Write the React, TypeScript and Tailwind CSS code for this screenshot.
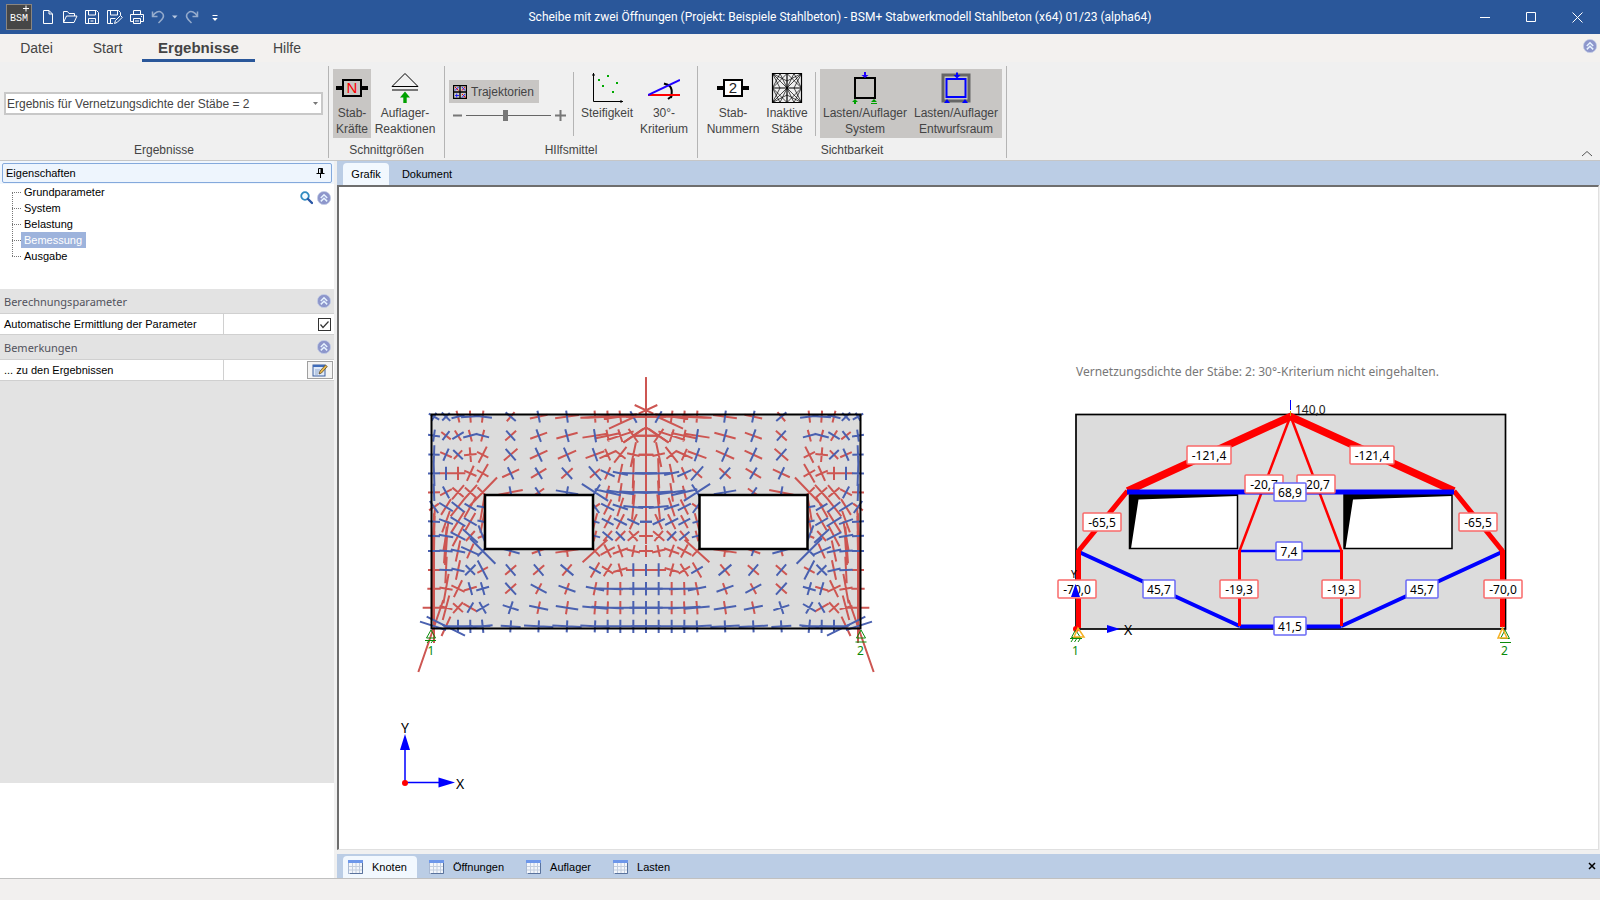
import type { ReactNode } from 'react';

/* ---------- small icons ---------- */

function CollapseIcon() {
  return (
    <svg width="14" height="14" viewBox="0 0 14 14" aria-hidden="true">
      <circle cx="7" cy="7" r="6.6" fill="#8d96cb" stroke="#c3cde6" strokeWidth="0.8" />
      <path d="M3.8 7 7 3.8 10.2 7M3.8 10.4 7 7.2l3.2 3.2" fill="none" stroke="#e6f3ff" strokeWidth="1.5" />
    </svg>
  );
}

function TableIcon() {
  return (
    <svg width="16" height="14" viewBox="0 0 16 14" aria-hidden="true">
      <rect x="0.5" y="0.5" width="14" height="13" fill="#f3f6fb" stroke="#a9b9d3" />
      <rect x="0" y="0" width="15" height="3" fill="#6d97ea" />
      <path d="M1 6.5h13M1 10h13M4.5 3v10M8 3v10M11.5 3v10" stroke="#c3cede" fill="none" />
      <path d="M14.5 3v10.5H2" stroke="#5a739d" fill="none" />
    </svg>
  );
}

type QuickAction = { name: string; box: string; icon: ReactNode };

const quickActions: QuickAction[] = [
  {
    name: 'Neu',
    box: 'w-[22px]',
    icon: (
      <svg width="12" height="16" viewBox="0 0 12 16">
        <path d="M1.5 1.5H7L10.5 5v9.5h-9zM7 1.5V5h3.5" />
      </svg>
    ),
  },
  {
    name: 'Öffnen',
    box: 'w-[22px]',
    icon: (
      <svg width="16" height="16" viewBox="0 0 16 16">
        <path d="M1.5 13.5v-11h4l1.5 2h5.5V7M1.5 13.5 4.5 7H15l-3 6.5z" />
      </svg>
    ),
  },
  {
    name: 'Speichern',
    box: 'w-[22px]',
    icon: (
      <svg width="16" height="16" viewBox="0 0 16 16">
        <path d="M1.5 1.5h11l2 2v11h-13zM4.5 1.5V6h7V1.5M4.5 14.5v-5h7v5M6.5 12h3" />
      </svg>
    ),
  },
  {
    name: 'Speichern unter',
    box: 'w-[23px]',
    icon: (
      <svg width="17" height="16" viewBox="0 0 17 16">
        <path d="M7 14.500H1.500v-13h11l2 2v3M4.500 1.500V6h7V1.500M4.500 14.500v-5h5M8.500 14.500l1-3 5-5 1.800 1.800-5 5z" />
      </svg>
    ),
  },
  {
    name: 'Drucken',
    box: 'w-[21px]',
    icon: (
      <svg width="16" height="16" viewBox="0 0 16 16">
        <path d="M4.5 5.5v-4h7v4M4.5 12.5h-3v-7h13v7h-3M4.5 9.500h7v5h-7zM6 12h4M12 7.500h1" />
      </svg>
    ),
  },
  {
    name: 'Rückgängig',
    box: 'w-[22px] opacity-50',
    icon: (
      <svg width="16" height="16" viewBox="0 0 16 16">
        <path d="M2.5 2.500v5h5M2.500 7.500C5 3 9 1.500 11.500 3.500c4 3 1.500 6.500-3 10.500" strokeWidth="1.5" />
      </svg>
    ),
  },
  {
    name: 'Rückgängig-Liste',
    box: 'w-[12px]',
    icon: (
      <svg width="6" height="16" viewBox="0 0 6 16">
        <path d="M0 6.500h5.500L2.800 9.500z" fill="#b9c9e0" stroke="none" />
      </svg>
    ),
  },
  {
    name: 'Wiederholen',
    box: 'w-[22px] opacity-50',
    icon: (
      <svg width="16" height="16" viewBox="0 0 16 16">
        <path d="M13.500 2.500v5h-5M13.500 7.500C11 3 7 1.500 4.500 3.500c-4 3-1.500 6.500 3 10.500" strokeWidth="1.5" />
      </svg>
    ),
  },
  {
    name: 'Anpassen',
    box: 'w-[24px]',
    icon: (
      <svg width="6" height="16" viewBox="0 0 6 16">
        <path d="M0.5 6.500h5" />
        <path d="M0.300 9h5.400L3 12z" fill="#fff" stroke="none" />
      </svg>
    ),
  },
];

function TitleBar() {
  return (
    <header className="relative flex h-[34px] items-center justify-between bg-[#2a579a] text-white">
      <div className="flex items-center">
        <svg className="ml-1.5 mr-[5px]" width="26" height="26" viewBox="0 0 26 26" aria-label="BSM+">
          <rect x="0.5" y="0.5" width="25" height="25" fill="#464646" stroke="#8a8580" />
          <text x="4" y="17" fontSize="10" fill="#fff" fontFamily="Liberation Mono, monospace">
            BSM
          </text>
          <path d="M20 1.500v6M17 4.500h6" stroke="#fff" />
        </svg>
        {quickActions.map(({ name, box, icon }) => (
          <button
            key={name}
            aria-label={name}
            className={`flex h-8 items-center justify-center fill-none stroke-white ${box}`}
          >
            {icon}
          </button>
        ))}
      </div>
      <h1 className="pointer-events-none absolute inset-x-0 pl-20 text-center font-[Roboto,sans-serif] text-[12px]">
        Scheibe mit zwei Öffnungen (Projekt: Beispiele Stahlbeton) - BSM+ Stabwerkmodell Stahlbeton (x64) 01/23
        (alpha64)
      </h1>
      <div className="flex fill-none stroke-white">
        <button aria-label="Minimieren" className="flex h-[34px] w-[46px] items-center justify-center">
          <svg width="11" height="11" viewBox="0 0 11 11">
            <path d="M0 5.500h10" />
          </svg>
        </button>
        <button aria-label="Maximieren" className="flex h-[34px] w-[46px] items-center justify-center">
          <svg width="11" height="11" viewBox="0 0 11 11">
            <path d="M0.500 0.500h9v9h-9z" />
          </svg>
        </button>
        <button aria-label="Schließen" className="flex h-[34px] w-[46px] items-center justify-center">
          <svg width="11" height="11" viewBox="0 0 11 11">
            <path d="M0.500 0.500l10 10M10.500 0.500l-10 10" />
          </svg>
        </button>
      </div>
    </header>
  );
}

function MenuTabs() {
  return (
    <nav className="flex h-[28px] justify-between bg-[#f3f1ef] text-[14px] text-[#444]">
      <div className="flex">
        <button className="w-[73px]">Datei</button>
        <button className="w-[69px]">Start</button>
        <button className="w-[113px] border-b-[3px] border-[#2a579a] pt-[3px] text-[15px] font-bold">
          Ergebnisse
        </button>
        <button className="w-16">Hilfe</button>
      </div>
      <button aria-label="Menüband ausblenden" className="mr-[3px] self-start pt-[5px]">
        <CollapseIcon />
      </button>
    </nav>
  );
}

/* ---------- ribbon ---------- */

function RibbonGroup({ title, className, children }: { title: string; className: string; children: ReactNode }) {
  return (
    <section className={`flex h-[92px] flex-col border-r border-[#b4b4b4] ${className}`}>
      <div className="flex h-[77px] items-start pt-[3px]">{children}</div>
      <h2 className="text-center text-[12px] leading-4">{title}</h2>
    </section>
  );
}

type RibbonButtonProps = { lines: string[]; className: string; icon: ReactNode; active?: boolean };

function RibbonButton({ lines, className, icon, active }: RibbonButtonProps) {
  return (
    <button
      aria-pressed={active}
      className={`flex h-[69px] flex-col items-center pt-[3px] text-[12px] leading-4 ${
        active ? 'bg-[#c8c6c4]' : ''
      } ${className}`}
    >
      <span className="mb-px">{icon}</span>
      {lines.map((line) => (
        <span key={line} className="whitespace-nowrap">
          {line}
        </span>
      ))}
    </button>
  );
}

function MemberIcon({ label, color, fill }: { label: string; color: string; fill: string }) {
  return (
    <svg className="block" width="32" height="32" viewBox="0 0 32 32" aria-hidden="true">
      <path d="M0 16h32" stroke="#000" strokeWidth="4" />
      <rect x="7" y="8" width="18" height="16" fill={fill} stroke="#000" strokeWidth="2" />
      <text x="16" y="21" textAnchor="middle" fontSize="15" fill={color} fontFamily="Liberation Sans, sans-serif">
        {label}
      </text>
    </svg>
  );
}

function SupportIcon() {
  return (
    <svg className="block" width="32" height="32" viewBox="0 0 32 32" aria-hidden="true">
      <path d="M16 1.500 29 14.500H3zM3 18h26" fill="none" stroke="#000" />
      <path d="M16 19.500l5 6h-3.300V31h-3.400v-5.500H11z" fill="#00a000" />
    </svg>
  );
}

function StiffnessIcon() {
  const dots = [
    [8, 8],
    [17, 4],
    [12, 14],
    [26, 11],
    [22, 20],
  ];
  return (
    <svg className="block" width="32" height="32" viewBox="0 0 32 32" aria-hidden="true">
      <path d="M2.500 1v28.500H32M1 3h3M30 28v3" fill="none" stroke="#000" />
      {dots.map(([x, y]) => (
        <rect key={x} x={x - 1} y={y - 1} width="2" height="2" fill="#00a800" />
      ))}
    </svg>
  );
}

function AngleIcon() {
  return (
    <svg className="block" width="32" height="32" viewBox="0 0 32 32" aria-hidden="true">
      <path d="M17 12q9 1 6 14M16 11.500l5 2M20 27l4-3" fill="none" stroke="#000" strokeWidth="2" />
      <path d="M0 23h32" stroke="#f00" strokeWidth="2" />
      <path d="M0 23 32 8" stroke="#2000ff" strokeWidth="2" />
    </svg>
  );
}

function MeshIcon() {
  return (
    <svg className="block" width="32" height="32" viewBox="0 0 32 32" aria-hidden="true">
      <g fill="none" stroke="#000" strokeWidth="0.7">
        <path d="M1.500 1.500h29v29h-29zM16 1.500v29M1.500 16h29" strokeWidth="1.2" />
        <path d="M1.500 1.500l29 29M30.500 1.500l-29 29M16 1.500 1.500 16 16 30.500 30.500 16z" />
        <path d="M1.500 1.500 16 9 30.500 1.500 23 16l7.500 14.500L16 23 1.500 30.500 9 16z" />
        <path d="M9 1.500 1.500 16 9 30.500 16 16zM23 1.500 30.500 16 23 30.500 16 16z" />
      </g>
    </svg>
  );
}

function SystemLoadIcon() {
  return (
    <svg className="block" width="32" height="32" viewBox="0 0 32 32" aria-hidden="true">
      <rect x="6" y="6" width="20" height="20" fill="none" stroke="#000" strokeWidth="2" />
      <path d="M15 0h2v3h2.500L16 6l-3.500-3H15z" fill="#2000ff" />
      <path d="M6 27l3 3H7v2H5v-2H3zM25 27l3 3h-6zM22 31h6v1h-6z" fill="#00a000" />
    </svg>
  );
}

function DesignLoadIcon() {
  return (
    <svg className="block" width="32" height="32" viewBox="0 0 32 32" aria-hidden="true">
      <rect x="3" y="3" width="26" height="26" fill="none" stroke="#666" strokeWidth="3" />
      <rect x="6.500" y="7" width="19" height="18" fill="none" stroke="#00f" strokeWidth="2" />
      <path d="M16 0.500h2V3h2.500L17 6.500 13.500 3H16zM7 27l3 4H4zM25 27l3 4h-6z" fill="#00f" />
    </svg>
  );
}

function TrajectoryIcon() {
  return (
    <svg width="14" height="14" viewBox="0 0 14 14" aria-hidden="true">
      <path d="M0.500 0.500h13v13h-13zM7 0v14M0 7h14" fill="none" stroke="#000" strokeWidth="1.3" />
      <path d="M2 2l3.500 3.500M9 5.500 12 2M9 9l3.500 3.500" stroke="#f00" />
      <path d="M2 5.500 5.500 2M9 2l3 3.500M3.700 8.500v4M2 10.500h4M9 12.500 12 9" stroke="#22f" />
    </svg>
  );
}

function Ribbon() {
  return (
    <div className="relative flex h-[99px] border-b border-[#c6c6c6] bg-[#f0f0f0] pt-1 text-[#444]">
      <RibbonGroup title="Ergebnisse" className="w-[329px]">
        <label className="relative ml-1 mt-[23px] block h-[23px] w-[319px]">
          <select
            aria-label="Ergebnis"
            className="block h-[23px] w-full appearance-none border-2 border-[#c8c8c8] bg-white pl-px text-[12px] text-[#444]"
          >
            <option>Ergebnis für Vernetzungsdichte der Stäbe = 2</option>
          </select>
          <svg className="pointer-events-none absolute right-[5px] top-[10px]" width="5" height="3">
            <path d="M0 0h5L2.500 3z" fill="#777" />
          </svg>
        </label>
      </RibbonGroup>
      <RibbonGroup title="Schnittgrößen" className="w-[116px]">
        <RibbonButton
          active
          className="ml-1 w-[38px]"
          lines={['Stab-', 'Kräfte']}
          icon={<MemberIcon label="N" color="#f00" fill="#c8c6c4" />}
        />
        <RibbonButton className="w-[68px]" lines={['Auflager-', 'Reaktionen']} icon={<SupportIcon />} />
      </RibbonGroup>
      <RibbonGroup title="HIlfsmittel" className="w-[253px]">
        <div className="ml-1 flex w-[120px] flex-col pt-[11px]">
          <button aria-pressed className="flex h-[23px] w-[90px] items-center gap-1 bg-[#c8c6c4] pl-1 text-[12px]">
            <TrajectoryIcon />
            Trajektorien
          </button>
          <div className="flex h-[25px] items-center gap-1 pl-1">
            <svg width="9" height="11" aria-hidden="true">
              <path d="M0 5.500h9" stroke="#777" strokeWidth="2" />
            </svg>
            <input
              type="range"
              aria-label="Größe der Trajektorien"
              defaultValue={46}
              className="h-3 w-[85px] appearance-none bg-[linear-gradient(#666,#666)] bg-[length:100%_1px] bg-center bg-no-repeat [&::-webkit-slider-thumb]:h-[11px] [&::-webkit-slider-thumb]:w-[5px] [&::-webkit-slider-thumb]:appearance-none [&::-webkit-slider-thumb]:bg-[#777]"
            />
            <svg width="11" height="11" aria-hidden="true">
              <path d="M0 5.500h11M5.500 0v11" stroke="#777" strokeWidth="2" />
            </svg>
          </div>
        </div>
        <div className="ml-1 mt-[3px] h-16 w-px bg-[#b4b4b4]" />
        <RibbonButton className="ml-1 w-[58px]" lines={['Steifigkeit']} icon={<StiffnessIcon />} />
        <RibbonButton className="w-[56px]" lines={['30°-', 'Kriterium']} icon={<AngleIcon />} />
      </RibbonGroup>
      <RibbonGroup title="Sichtbarkeit" className="w-[309px]">
        <RibbonButton
          className="ml-1 w-[62px]"
          lines={['Stab-', 'Nummern']}
          icon={<MemberIcon label="2" color="#222" fill="#fff" />}
        />
        <RibbonButton className="w-[46px]" lines={['Inaktive', 'Stäbe']} icon={<MeshIcon />} />
        <div className="ml-[5px] mt-[3px] h-16 w-px bg-[#b4b4b4]" />
        <RibbonButton
          active
          className="ml-1 w-[90px]"
          lines={['Lasten/Auflager', 'System']}
          icon={<SystemLoadIcon />}
        />
        <RibbonButton
          active
          className="w-[92px]"
          lines={['Lasten/Auflager', 'Entwurfsraum']}
          icon={<DesignLoadIcon />}
        />
      </RibbonGroup>
      <button aria-label="Menüband minimieren" className="mb-[3px] ml-auto mr-[7px] self-end">
        <svg width="12" height="7" viewBox="0 0 12 7">
          <path d="M1 6 6 1.500 11 6" fill="none" stroke="#555" />
        </svg>
      </button>
    </div>
  );
}

/* ---------- property panel ---------- */

const treeItems = ['Grundparameter', 'System', 'Belastung', 'Bemessung', 'Ausgabe'];

function SectionHead({ title }: { title: string }) {
  return (
    <div className="flex h-[25px] items-center justify-between border-b border-[#d0d0d0] bg-[#e3e3e3] pl-1 pr-[3px]">
      <h3 className='pt-0.5 font-["Noto_Sans",sans-serif] text-[11px] text-[#52525c]'>{title}</h3>
      <button aria-label={`${title} einklappen`}>
        <CollapseIcon />
      </button>
    </div>
  );
}

function PropertyPanel() {
  return (
    <aside className="flex w-[334px] shrink-0 flex-col bg-white text-[11px] text-black">
      <div className="bg-[#f0f6fd] px-0.5 pb-px pt-0.5">
        <div className="flex h-5 items-center justify-between rounded-[2px] border border-[#84a9dc] bg-[#eef5fd] pl-[3px] pr-1.5">
          <h2>Eigenschaften</h2>
          <button aria-label="Anheften">
            <svg width="9" height="10" viewBox="0 0 9 10">
              <path d="M2.500 0.500h4v5h-4zM0.500 5.500h8M4.500 5.500V10" fill="none" stroke="#000" />
              <path d="M5.500 0.500v5" stroke="#000" strokeWidth="2" />
            </svg>
          </button>
        </div>
      </div>
      <div className="flex h-[105px] justify-between pl-3 pr-[3px]">
        <div className="relative">
          <ul>
            {treeItems.map((item) => (
              <li key={item} className="flex h-4 items-center">
                <span className="w-[9px] border-t border-dotted border-[#777]" />
                <button
                  className={`h-4 pl-[3px] leading-4 ${item === 'Bemessung' ? 'bg-[#9db3dc] pr-1 text-white' : ''}`}
                >
                  {item}
                </button>
              </li>
            ))}
          </ul>
          <span className="absolute left-0 top-2 h-16 border-l border-dotted border-[#777]" />
        </div>
        <div className="flex items-start gap-1 pt-[7px]">
          <button aria-label="Suchen">
            <svg width="13" height="14" viewBox="0 0 13 14">
              <circle cx="5" cy="5" r="3.8" fill="#f4fbff" stroke="#2f8ac0" strokeWidth="1.8" />
              <path d="M8 8l4 4" stroke="#2b57a5" strokeWidth="2.4" strokeLinecap="round" />
            </svg>
          </button>
          <button aria-label="Einklappen">
            <CollapseIcon />
          </button>
        </div>
      </div>
      <SectionHead title="Berechnungsparameter" />
      <div className="flex h-[21px] items-center border-b border-[#d0d0d0]">
        <label htmlFor="auto" className="w-[224px] border-r border-[#d0d0d0] pl-1 leading-5">
          Automatische Ermittlung der Parameter
        </label>
        <span className="relative ml-auto mr-[3px] h-[13px] w-[13px]">
          <input
            id="auto"
            type="checkbox"
            defaultChecked
            className="block h-[13px] w-[13px] appearance-none border border-[#333] bg-white"
          />
          <svg className="pointer-events-none absolute left-0 top-0" width="13" height="13" viewBox="0 0 13 13">
            <path d="M2.500 6.500l2.500 3 5.500-6" fill="none" stroke="#333" strokeWidth="1.2" />
          </svg>
        </span>
      </div>
      <SectionHead title="Bemerkungen" />
      <div className="flex h-[21px] items-center border-b border-[#d0d0d0]">
        <span className="w-[224px] border-r border-[#d0d0d0] pl-1 leading-5">... zu den Ergebnissen</span>
        <button
          aria-label="Bemerkungen bearbeiten"
          className="ml-auto mr-px flex h-[18px] w-[26px] items-center justify-center border border-[#a0a0a0] bg-[#f4f4f4]"
        >
          <svg width="16" height="13" viewBox="0 0 16 13">
            <rect x="1" y="1" width="12" height="11" fill="#dfeafa" stroke="#3c5f9e" />
            <rect x="1" y="1" width="12" height="2" fill="#3f6cba" />
            <path d="M3 6h5M3 8h4M3 10h3" stroke="#93a9cc" />
            <path d="M7 10l1-3 5.500-6 1.800 1.500L9.500 9z" fill="#e9b94e" stroke="#4a3b1d" strokeWidth="0.7" />
          </svg>
        </button>
      </div>
      <div className="flex-1 bg-[#e3e3e3]" />
      <div className="h-[95px]" />
    </aside>
  );
}

/* ---------- stress trajectories ---------- */

const RED = '#cd5652';
const BLUE = '#4a61b0';

// angle, half length of main line, half length of cross line, their colours
type Cross = [number, number, number, string] | null;

const columns = [72, 108, 144, 181, 218, 302, 386, 471, 555, 593, 631, 670, 708];
const rows = [140, 197, 254, 310, 367, 411, 455, 498, 543, 600, 656, 713, 769];

const crosses: Cross[][] = [
  [[30, 18, 14, 'bb'], [45, 18, 16, 'bb'], [-14, 20, 18, 'br'], [-4, 28, 18, 'br'], [7, 28, 18, 'br'], [40, 20, 18, 'br'], [-12, 27, 18, 'rb'], [-8, 36, 18, 'rb'], [-4, 44, 18, 'rr'], [-3, 60, 18, 'rr'], [-8, 50, 18, 'rr'], [0, 38, 0, 'rb'], [0, 60, 20, 'rr']],
  [[8, 18, 18, 'bb'], [38, 18, 17, 'rb'], [-32, 20, 18, 'br'], [-15, 22, 18, 'br'], [15, 20, 18, 'br'], [-42, 22, 20, 'rb'], [-20, 27, 20, 'rb'], [-15, 33, 20, 'rb'], [-9, 38, 20, 'rb'], [-12, 40, 18, 'rr'], [-18, 42, 20, 'rr'], [-35, 36, 25, 'rr'], [0, 38, 20, 'rr']],
  [[92, 28, 17, 'bb'], [24, 19, 20, 'rb'], [44, 20, 18, 'br'], [85, 22, 19, 'rr'], [-63, 27, 19, 'rr'], [-41, 27, 23, 'rb'], [-25, 29, 23, 'rb'], [-24, 30, 23, 'rb'], [-20, 30, 21, 'rb'], [-24, 27, 19, 'rr'], [-52, 30, 20, 'rr'], [-78, 38, 19, 'rr'], [0, 22, 20, 'rr']],
  [[88, 38, 18, 'bb'], [0, 20, 20, 'rb'], [0, 22, 20, 'rr'], [-66, 25, 20, 'rr'], [-60, 32, 20, 'rr'], [-25, 28, 20, 'rb'], [-31, 27, 20, 'rb'], [-42, 23, 23, 'rb'], [49, 28, 20, 'br'], [24, 23, 20, 'br'], [-78, 29, 23, 'rb'], [-88, 45, 35, 'rb'], [0, 33, 0, 'br']],
  [[88, 26, 18, 'br'], [-28, 20, 20, 'rb'], [-50, 28, 22, 'rr'], [-48, 30, 22, 'rr'], [-46, 62, 22, 'rr'], [-11, 37, 18, 'rb'], [-35, 20, 18, 'rb'], [10, 34, 18, 'bb'], [33, 47, 28, 'bb'], [13, 40, 20, 'br'], [8, 42, 28, 'br'], [3, 42, 36, 'br'], [0, 40, 0, 'br']],
  [[55, 22, 18, 'br'], [-58, 28, 24, 'rb'], [-52, 36, 24, 'rb'], [-60, 36, 20, 'rb'], [-80, 40, 18, 'rb'], null, null, null, [55, 22, 18, 'br'], [-63, 25, 22, 'rb'], [-72, 29, 24, 'rb'], [-84, 38, 30, 'rb'], [0, 22, 0, 'br']],
  [[-86, 40, 18, 'rb'], [-70, 34, 22, 'rb'], [-58, 38, 26, 'rb'], [-60, 30, 22, 'rb'], [-78, 34, 16, 'rb'], null, null, null, [-75, 26, 14, 'rb'], [-62, 22, 20, 'rb'], [-63, 25, 22, 'rb'], [-65, 25, 20, 'rb'], [0, 18, 0, 'br']],
  [[-88, 60, 18, 'rb'], [-80, 45, 22, 'rb'], [-62, 35, 25, 'rb'], [42, 30, 20, 'br'], [68, 34, 16, 'br'], null, null, null, [15, 16, 16, 'br'], [-50, 20, 20, 'rb'], [-45, 21, 19, 'rb'], [-40, 22, 20, 'rr'], [0, 20, 20, 'rr']],
  [[-89, 60, 18, 'rb'], [-86, 42, 20, 'rb'], [-78, 32, 22, 'rb'], [24, 30, 24, 'br'], [45, 54, 22, 'bb'], [16, 28, 16, 'br'], [-20, 22, 16, 'rb'], [-8, 35, 18, 'rr'], [-42, 50, 22, 'rr'], [-28, 24, 22, 'rr'], [-20, 24, 20, 'rr'], [12, 20, 18, 'rr'], [0, 20, 18, 'rr']],
  [[90, 60, 18, 'rr'], [-87, 40, 20, 'rb'], [-78, 30, 20, 'rb'], [-45, 22, 20, 'bb'], [62, 32, 18, 'br'], [-41, 22, 22, 'rb'], [-41, 22, 22, 'rb'], [40, 25, 22, 'br'], [-60, 26, 20, 'rb'], [-58, 22, 20, 'rr'], [-16, 22, 20, 'rr'], [0, 22, 20, 'rb'], [0, 22, 18, 'rb']],
  [[90, 60, 20, 'rr'], [-80, 45, 20, 'rr'], [-64, 28, 22, 'rr'], [-16, 20, 20, 'rb'], [-16, 20, 20, 'bb'], [48, 24, 22, 'br'], [28, 27, 18, 'br'], [20, 27, 18, 'br'], [12, 28, 20, 'br'], [2, 46, 20, 'br'], [0, 50, 20, 'br'], [0, 50, 20, 'bb'], [0, 50, 20, 'bb']],
  [[0, 34, 40, 'rr'], [-75, 38, 20, 'rr'], [-48, 22, 20, 'rr'], [30, 24, 18, 'rb'], [-30, 22, 20, 'bb'], [18, 25, 20, 'bb'], [12, 29, 19, 'br'], [9, 34, 20, 'br'], [5, 38, 20, 'br'], [3, 48, 19, 'br'], [0, 50, 20, 'br'], [0, 50, 20, 'bb'], [0, 50, 20, 'bb']],
  [[90, 50, 0, 'rr'], [-65, 32, 12, 'rb'], [0, 44, 20, 'bb'], [-1, 60, 20, 'bb'], [-6, 30, 20, 'bb'], [4, 30, 18, 'bb'], [3, 44, 18, 'bb'], [3, 44, 18, 'bb'], [3, 44, 18, 'bb'], [0, 44, 20, 'bb'], [0, 44, 20, 'bb'], [0, 44, 20, 'bb'], [0, 44, 20, 'bb']],
];

function segment(x: number, y: number, angle: number, half: number) {
  const a = (angle * Math.PI) / 180;
  const dx = Math.cos(a) * half;
  const dy = Math.sin(a) * half;
  return `M${(x - dx).toFixed(1)} ${(y - dy).toFixed(1)}L${(x + dx).toFixed(1)} ${(y + dy).toFixed(1)}`;
}

const paths = { r: '', b: '' };
crosses.forEach((line, r) =>
  line.forEach((cross, c) => {
    if (!cross) return;
    const [angle, main, minor, colors] = cross;
    paths[colors[0] as 'r' | 'b'] += segment(columns[c], rows[r], angle, main);
    paths[colors[1] as 'r' | 'b'] += segment(columns[c], rows[r], angle + 90, minor);
  }),
);

function HalfField() {
  return (
    <g fill="none" strokeWidth="6">
      <path d={paths.r} stroke={RED} />
      <path
        d="M25 906 100 690M72 430v310M68 500v250M110 470l-8 110M597 176l82-38M674 105l56 26M708 22v500M640 218l68-46"
        stroke={RED}
      />
      <path d={paths.b} stroke={BLUE} />
      <path d="M50 740l115 57M30 755l78 25M661 124l19 34" stroke={BLUE} />
    </g>
  );
}

function TrajectoryPlot() {
  return (
    <g>
      <rect x="431.500" y="414.500" width="429" height="214" fill="#dcdcdc" />
      <g transform="translate(410 370) scale(0.33333)">
        <HalfField />
      </g>
      <g transform="translate(882 370) scale(-0.33333 0.33333)">
        <HalfField />
      </g>
      <rect x="431.500" y="414.500" width="429" height="214" fill="none" stroke="#000" strokeWidth="2" />
      <rect x="485" y="495" width="108" height="54" fill="#fff" stroke="#000" strokeWidth="2.5" />
      <rect x="699.500" y="495" width="108" height="54" fill="#fff" stroke="#000" strokeWidth="2.5" />
      <g fill="none" stroke="#0a8a0a">
        <path d="M431 630l-4.500 8h9zM425 640.500h11M427 643l2-2.500M431 643l2-2.500" />
        <path d="M861 630l-4.500 8h9zM855.500 642h11" />
      </g>
      <g fill="#0a8a0a" fontSize="12" textAnchor="middle">
        <text x="431" y="655">1</text>
        <text x="860.500" y="655">2</text>
      </g>
    </g>
  );
}

/* ---------- strut and tie model ---------- */

type Tag = { x: number; y: number; w: number; text: string; tie?: boolean };

const tags: Tag[] = [
  { x: 1209, y: 455, w: 44, text: '-121,4' },
  { x: 1372, y: 455, w: 44, text: '-121,4' },
  { x: 1264, y: 484, w: 38, text: '-20,7' },
  { x: 1316, y: 484, w: 38, text: '-20,7' },
  { x: 1290, y: 492, w: 32, text: '68,9', tie: true },
  { x: 1102, y: 522, w: 38, text: '-65,5' },
  { x: 1478, y: 522, w: 38, text: '-65,5' },
  { x: 1289, y: 551, w: 26, text: '7,4', tie: true },
  { x: 1077, y: 589, w: 38, text: '-70,0' },
  { x: 1159, y: 589, w: 32, text: '45,7', tie: true },
  { x: 1239, y: 589, w: 38, text: '-19,3' },
  { x: 1341, y: 589, w: 38, text: '-19,3' },
  { x: 1422, y: 589, w: 32, text: '45,7', tie: true },
  { x: 1503, y: 589, w: 38, text: '-70,0' },
  { x: 1290, y: 626, w: 32, text: '41,5', tie: true },
];

function Opening({ x }: { x: number }) {
  return (
    <g>
      <rect x={x} y="494.500" width="108" height="54" fill="#fff" stroke="#000" strokeWidth="1.5" />
      <path d={`M${x} 494.500h108v1.500l-99 3.500-7.500 49H${x}z`} fill="#000" />
    </g>
  );
}

function StrutAndTieModel() {
  return (
    <g>
      <text x="1076" y="376" fontSize="12" fill="#777">
        Vernetzungsdichte der Stäbe: 2: 30°-Kriterium nicht eingehalten.
      </text>
      <rect x="1076" y="414.500" width="429.500" height="214.500" fill="#dcdcdc" stroke="#000" strokeWidth="1.7" />
      <Opening x={1129.5} />
      <Opening x={1344} />
      <g fill="none" stroke="#00f">
        <path d="M1079 552l160.500 74M1502 552l-160.500 74" strokeWidth="4" />
        <path d="M1239.500 626.500h102" strokeWidth="4" />
        <path d="M1239.500 551h102" strokeWidth="2.5" />
      </g>
      <g fill="none" stroke="#f00">
        <path d="M1127.500 491 1290.500 416.500 1454 491" strokeWidth="7.5" />
        <path d="M1127.500 491 1078.500 551M1454 491l48.500 60" strokeWidth="5" />
        <path d="M1078.500 550v78M1502.500 550v77" strokeWidth="5" />
        <path d="M1290.500 416 1239.500 551M1290.500 416l51 135" strokeWidth="2.5" />
        <path d="M1239.500 550v76M1341.500 550v76" strokeWidth="3" />
      </g>
      <path d="M1127 492h327" stroke="#00f" strokeWidth="5" />
      <path d="M1290.500 400v10" stroke="#00f" />
      <path d="M1290.500 411v5" stroke="#c8a000" />
      <text x="1295" y="414" fontSize="12" fill="#222">
        140,0
      </text>
      <text x="1071" y="578" fontSize="10">
        Y
      </text>
      {tags.map(({ x, y, w, text, tie }) => (
        <g key={`${text}${x}`}>
          <rect
            x={x - w / 2}
            y={y - 9}
            width={w}
            height="18"
            rx="1"
            fill="#fff"
            stroke={tie ? '#6a6af5' : '#f96a6a'}
            strokeWidth="1.5"
          />
          <text x={x} y={y + 5} fontSize="12" fill="#000" textAnchor="middle">
            {text}
          </text>
        </g>
      ))}
      <path d="M1075.500 584l4.500 13h-9zM1120 629l-13-4v8z" fill="#00f" />
      <circle cx="1076" cy="629" r="3" fill="#f00" />
      <text x="1124" y="635" fontSize="14">
        X
      </text>
      <g fill="none" stroke="#0a8a0a">
        <path d="M1075.500 630l-4 7.500h9zM1070 638.500h12M1071 642l2-3M1074.500 642l2-3M1078 642l2-3" />
        <path d="M1505 630l-4.500 8.500h9zM1500 642.500h11" />
      </g>
      <g fill="none" stroke="#f5b020" strokeWidth="1.5">
        <path d="M1078 628l-4 9h10zM1502.500 628l-4.500 10h9z" />
      </g>
      <g fill="#0a8a0a" fontSize="12" textAnchor="middle">
        <text x="1075.500" y="655">1</text>
        <text x="1504.500" y="655">2</text>
      </g>
    </g>
  );
}

function GraphicCanvas() {
  return (
    <div className="mr-px min-h-0 flex-1 border border-l-2 border-t-2 border-[#e0e0e0] border-l-[#6e6e6e] border-t-[#6e6e6e] bg-white">
      <svg
        className='block h-full w-full font-["Noto_Sans",sans-serif]'
        viewBox="339 187 1259 662"
        role="img"
        aria-label="Grafik"
      >
        <TrajectoryPlot />
        <StrutAndTieModel />
        <g>
          <path d="M405 782v-40M405 782.500h40" stroke="#00f" strokeWidth="1.5" />
          <path d="M405 734l5 16h-10zM455 782.500l-16.500-5v10z" fill="#00f" />
          <circle cx="405" cy="783" r="3" fill="#f00" />
          <text x="401" y="733" fontSize="14">
            Y
          </text>
          <text x="456" y="789" fontSize="14">
            X
          </text>
        </g>
      </svg>
    </div>
  );
}

const tableTabs = ['Knoten', 'Öffnungen', 'Auflager', 'Lasten'];

function Workspace() {
  return (
    <main className="ml-[3px] flex min-w-0 flex-1 flex-col text-[11px] text-black">
      <div className="flex h-6 items-end bg-[#bbcde5] pl-1.5">
        <button className="h-[22px] w-[46px] rounded-t bg-[#f2f8fe]">Grafik</button>
        <button className="ml-2 h-[22px] w-[60px]">Dokument</button>
      </div>
      <GraphicCanvas />
      <div className="mt-1 flex h-6 items-end bg-[#bbcde5] pl-1.5">
        {tableTabs.map((tab, i) => (
          <button
            key={tab}
            className={`mr-[7px] flex h-[22px] items-center gap-2 pl-[5px] pr-2.5 ${i === 0 ? 'rounded-t bg-[#f2f8fe]' : ''}`}
          >
            <TableIcon />
            {tab}
          </button>
        ))}
        <button aria-label="Tabelle schließen" className="ml-auto mr-1 flex h-6 items-center">
          <svg width="8" height="8" viewBox="0 0 8 8">
            <path d="M1 1l6 6M7 1 1 7" stroke="#000" strokeWidth="1.5" />
          </svg>
        </button>
      </div>
    </main>
  );
}

export default function App() {
  return (
    <div className='flex h-screen flex-col overflow-hidden bg-[#f0f0f0] font-["Liberation_Sans",Arial,sans-serif]'>
      <TitleBar />
      <MenuTabs />
      <Ribbon />
      <div className="flex min-h-0 flex-1">
        <PropertyPanel />
        <Workspace />
      </div>
      <footer className="h-[22px] shrink-0 border-t border-[#c0c0c0] bg-[#f2f0ef]" />
    </div>
  );
}
